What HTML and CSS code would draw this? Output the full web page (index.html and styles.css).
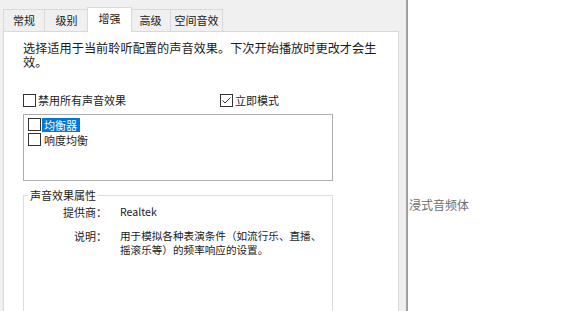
FILE: index.html
```html
<!DOCTYPE html>
<html lang="zh-CN">
<head>
    <meta charset="UTF-8">
    <title>声音属性 - 增强</title>
    <link rel="stylesheet" href="styles.css">
</head>
<body>
    <div class="page">
        <div class="dialog">
            <div class="tabs">
                <div class="tab" style="width: 42px">常规</div>
                <div class="tab" style="width: 45px">级别</div>
                <div class="tab active" style="width: 45px">增强</div>
                <div class="tab" style="width: 41px">高级</div>
                <div class="tab" style="width: 53px">空间音效</div>
            </div>
            <div class="panel">
                <p class="intro">选择适用于当前聆听配置的声音效果。下次开始播放时更改才会生效。</p>

                <div class="options">
                    <label class="option wide"><span class="box"></span>禁用所有声音效果</label>
                    <label class="option">
                        <span class="box">
                            <svg width="11" height="11" viewBox="0 0 11 11"><path d="M1.5 5.5 L4 8 L9.5 2.5" fill="none" stroke="#333" stroke-width="1"/></svg>
                        </span>立即模式
                    </label>
                </div>

                <div class="listbox">
                    <div class="item"><span class="box"></span><span class="item-text selected">均衡器</span></div>
                    <div class="item"><span class="box"></span><span class="item-text">响度均衡</span></div>
                </div>

                <fieldset class="group">
                    <legend>声音效果属性</legend>
                    <div class="prop">
                        <span class="prop-label">提供商：</span>
                        <span class="prop-value">Realtek</span>
                    </div>
                    <div class="prop">
                        <span class="prop-label">说明：</span>
                        <span class="prop-value">用于模拟各种表演条件（如流行乐、直播、<br>摇滚乐等）的频率响应的设置。</span>
                    </div>
                </fieldset>
            </div>
        </div>
        <div class="divider"></div>
        <div class="side">
            <span class="side-text">浸式音频体</span>
        </div>
    </div>
</body>
</html>
```

FILE: styles.css
```css
* { margin: 0; padding: 0; box-sizing: border-box; }
body { font-family: "Microsoft YaHei", "Noto Sans CJK SC", sans-serif; font-size: 11px; color: #1a1a1a; background: white; }

.page { display: flex; height: 311px; overflow: hidden; }
.dialog { width: 406px; background: #f0f0f0; padding: 7px 7px 0 3px; display: flex; flex-direction: column; }
.divider { width: 2px; background: #a0a0a0; }
.side { flex: 1; background: white; padding: 196px 0 0 1px; }
.side-text { color: #6d6d6d; font-size: 12px; }

.tabs { display: flex; align-items: flex-end; height: 24px; }
.tab { height: 22px; line-height: 21px; text-align: center; border: 1px solid #d9d9d9; border-bottom: none; margin-right: -1px; background: #f0f0f0; }
.tab.active { height: 25px; line-height: 20px; background: white; margin-bottom: -1px; position: relative; z-index: 1; margin-left: -1px; margin-right: -2px; }

.panel { flex: 1; background: white; border: 1px solid #d9d9d9; padding: 9px 0 0 19px; }
.intro { width: 370px; font-size: 12.2px; line-height: 14px; }

.options { display: flex; margin-top: 23px; line-height: 16px; }
.option { display: flex; align-items: center; gap: 2px; }
.option.wide { width: 197px; }

.box { width: 13px; height: 13px; border: 1px solid #333; background: white; display: inline-flex; align-items: center; justify-content: center; flex: none; }

.listbox { width: 310px; height: 67px; margin-top: 6px; border: 1px solid #adadad; padding: 2px 4px; }
.item { display: flex; align-items: center; gap: 1px; height: 15px; }
.item-text { padding: 0 2px; line-height: 14px; }
.item-text.selected { background: #0078d7; color: white; padding: 0 3px 0 2px; }

.group { width: 310px; height: 140px; margin-top: 7px; border: 1px solid #dcdcdc; padding: 3px 0 0 0; }
.group legend { margin-left: 4px; padding: 0 2px; line-height: 14px; }
.prop { display: flex; gap: 13px; margin-bottom: 10px; line-height: 14px; }
.prop-label { width: 83px; text-align: right; }
.prop-value { white-space: nowrap; font-size: 10.6px; }
```
